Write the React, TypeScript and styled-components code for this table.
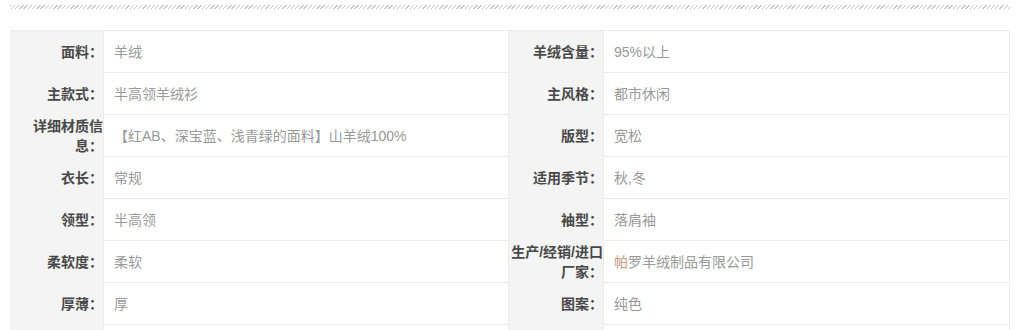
import React from "react";
import styled, { createGlobalStyle } from "styled-components";

const Global = createGlobalStyle`
  html, body { margin: 0; padding: 0; background: #fff; }
  body { font-family: "Liberation Sans", "Noto Sans CJK SC", sans-serif; }
`;

const Page = styled.div`
  padding: 5px 8px 0 10px;
  width: 1000px;
`;

const Hatch = styled.div`
  height: 4px;
  width: 1000px;
  margin-bottom: 21px;
  background: repeating-linear-gradient(
    135deg,
    #c8c8c8 0px,
    #c8c8c8 1px,
    transparent 1px,
    transparent 3px
  );
`;

const Table = styled.div`
  display: grid;
  grid-template-columns: 94px 405px 95px 406px;
  border-top: 1px solid #ececec;
  font-size: 14px;
  line-height: 20px;
`;

const Label = styled.div`
  box-sizing: border-box;
  height: 42px;
  display: flex;
  align-items: center;
  justify-content: flex-end;
  text-align: right;
  padding: 0;
  background: #f4f4f4;
  border-right: 1px solid #ececec;
  border-bottom: 1px solid #f4f4f4;
  color: #484848;
  font-weight: 700;
`;

const Value = styled.div`
  box-sizing: border-box;
  height: 42px;
  display: flex;
  align-items: center;
  padding: 0 10px;
  border-right: 1px solid #ececec;
  border-bottom: 1px solid #ececec;
  color: #999;
`;

const Accent = styled.span`
  color: #c49a82;
`;

type Cell = { label: string; value: React.ReactNode };

const rows: [Cell, Cell][] = [
  [
    { label: "面料：", value: "羊绒" },
    { label: "羊绒含量：", value: "95%以上" },
  ],
  [
    { label: "主款式：", value: "半高领羊绒衫" },
    { label: "主风格：", value: "都市休闲" },
  ],
  [
    { label: "详细材质信息：", value: "【红AB、深宝蓝、浅青绿的面料】山羊绒100%" },
    { label: "版型：", value: "宽松" },
  ],
  [
    { label: "衣长：", value: "常规" },
    { label: "适用季节：", value: "秋,冬" },
  ],
  [
    { label: "领型：", value: "半高领" },
    { label: "袖型：", value: "落肩袖" },
  ],
  [
    { label: "柔软度：", value: "柔软" },
    {
      label: "生产/经销/进口厂家：",
      value: (
        <>
          <Accent>帕</Accent>罗羊绒制品有限公司
        </>
      ),
    },
  ],
  [
    { label: "厚薄：", value: "厚" },
    { label: "图案：", value: "纯色" },
  ],
  [
    { label: "", value: "" },
    { label: "", value: "" },
  ],
];

export default function App() {
  return (
    <>
      <Global />
      <Page>
        <Hatch />
        <Table>
          {rows.map((row, i) => (
            <React.Fragment key={i}>
              {row.map((c, j) => (
                <React.Fragment key={j}>
                  <Label>{c.label}</Label>
                  <Value>{c.value}</Value>
                </React.Fragment>
              ))}
            </React.Fragment>
          ))}
        </Table>
      </Page>
    </>
  );
}
